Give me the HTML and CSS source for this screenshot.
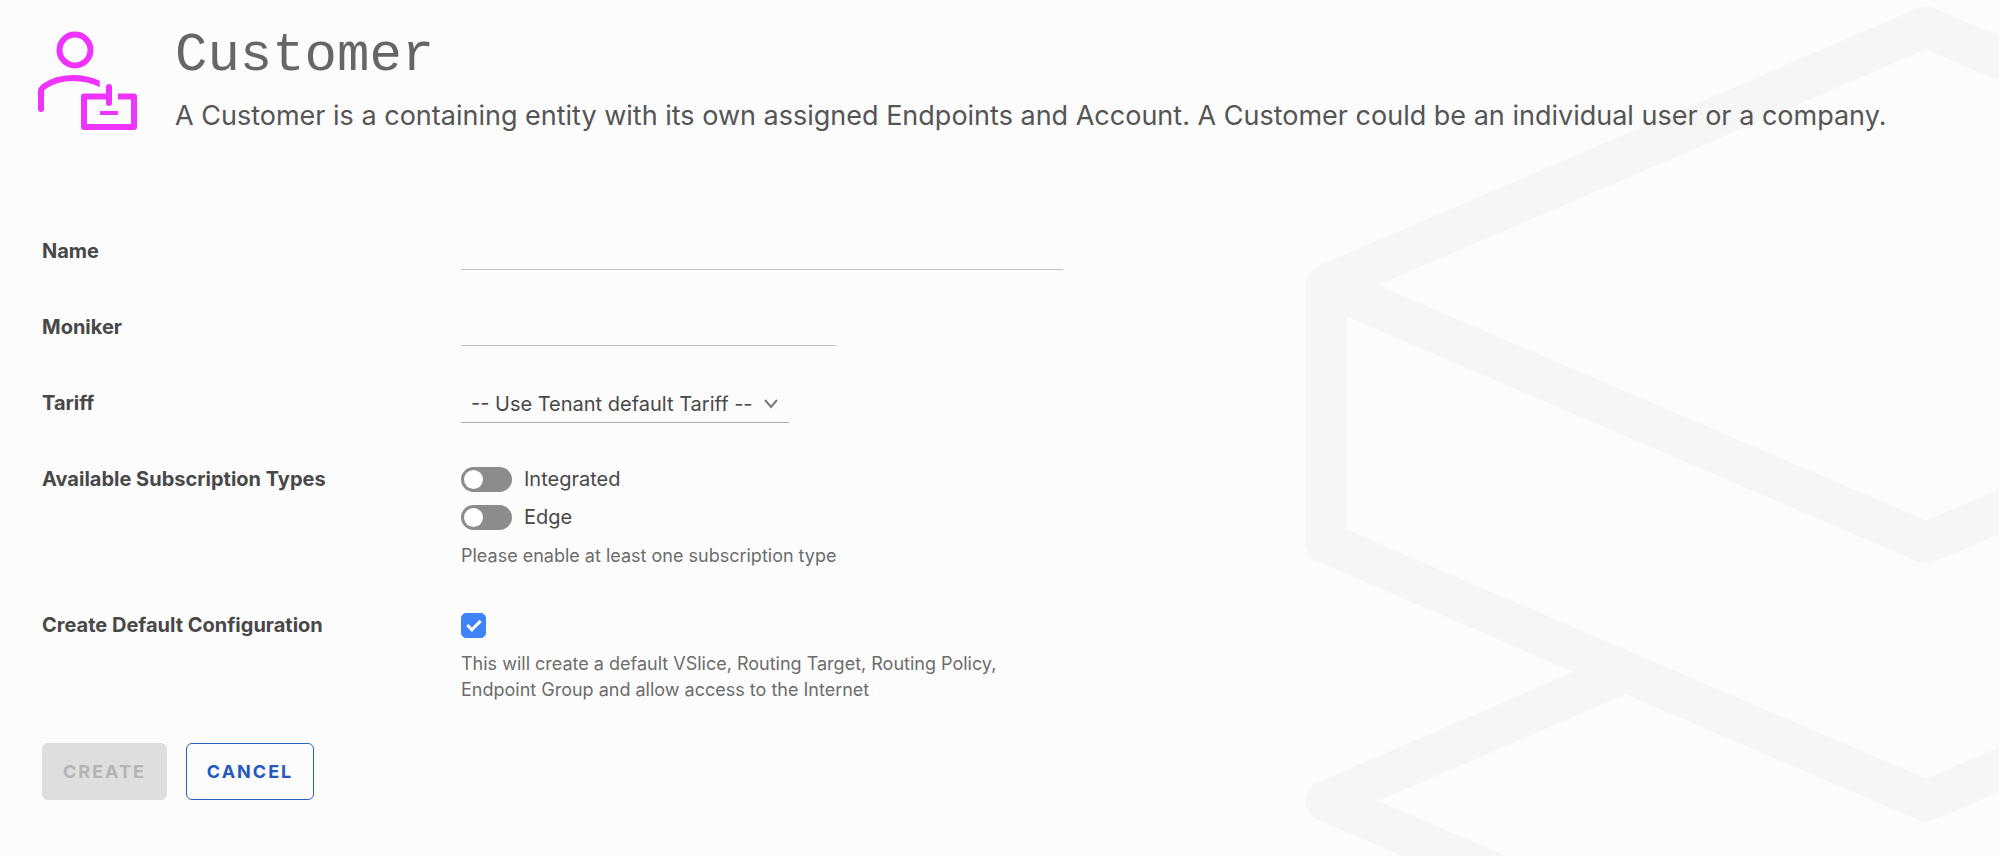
FILE: index.html
```html
<!DOCTYPE html>
<html lang="en">
<head>
    <meta charset="UTF-8">
    <meta name="viewport" content="width=device-width, initial-scale=1.0">
    <title>Customer</title>
    <link rel="stylesheet" href="styles.css">
</head>
<body>
    <svg class="backdrop" viewBox="0 0 694 856" width="694" height="856" aria-hidden="true">
        <g fill="none" stroke="#f6f6f6" stroke-width="41" stroke-linejoin="round">
            <path d="M21 285 L621 27 L1221 285 V543 L621 801 L21 543 Z"/>
            <path d="M21 285 L621 543 L1221 285"/>
            <path d="M321 672 L21 801 L621 1059"/>
        </g>
    </svg>

    <main class="page">
        <header class="page-header">
            <svg class="page-icon" viewBox="0 0 100 100" width="100" height="100" aria-hidden="true">
                <clipPath id="shoulder">
                    <path d="M-5 40 H61.7 V90 H-5 Z"/>
                </clipPath>
                <g fill="none" stroke="#ee33ff" stroke-width="6" stroke-linecap="round" stroke-linejoin="round">
                    <circle cx="37" cy="20" r="15.5"/>
                    <path d="M3 79 V61 Q3 59 6 56.5 C22 45.5 46 45 66 56" clip-path="url(#shoulder)"/>
                    <path d="M71 57 V73"/>
                    <path d="M71 66.5 H46 V97 H96 V66.5 H80" stroke-linecap="butt"/>
                    <path d="M62 83 H80" stroke-width="4" stroke-linecap="butt"/>
                </g>
            </svg>
            <div class="page-heading">
                <h1>Customer</h1>
                <p>A Customer is a containing entity with its own assigned Endpoints and Account. A Customer could be an individual user or a company.</p>
            </div>
        </header>

        <form class="customer-form">
            <div class="row">
                <label class="row-label" for="name">Name</label>
                <input class="text-input" type="text" id="name">
            </div>
            <div class="row">
                <label class="row-label" for="moniker">Moniker</label>
                <input class="text-input short" type="text" id="moniker">
            </div>
            <div class="row">
                <label class="row-label" for="tariff">Tariff</label>
                <div class="select">
                    <select id="tariff">
                        <option>-- Use Tenant default Tariff --</option>
                    </select>
                    <svg class="chevron" viewBox="0 0 16 10" width="16" height="10" aria-hidden="true">
                        <path d="M2 1 L8 8 L14 1" fill="none" stroke="#777" stroke-width="2"/>
                    </svg>
                </div>
            </div>
            <div class="row" role="group" aria-labelledby="types-label">
                <span class="row-label" id="types-label">Available Subscription Types</span>
                <div class="row-field">
                    <label class="switch"><input type="checkbox" role="switch"> Integrated</label>
                    <label class="switch"><input type="checkbox" role="switch"> Edge</label>
                    <p class="help">Please enable at least one subscription type</p>
                </div>
            </div>
            <div class="row">
                <label class="row-label" for="default-config">Create Default Configuration</label>
                <div class="row-field">
                    <div class="check">
                        <input type="checkbox" id="default-config" checked>
                    </div>
                    <p class="help">This will create a default VSlice, Routing Target, Routing Policy, Endpoint Group and allow access to the Internet</p>
                </div>
            </div>
            <div class="buttons">
                <button class="button create" type="submit" disabled>Create</button>
                <button class="button cancel" type="button">Cancel</button>
            </div>
        </form>
    </main>
</body>
</html>
```

FILE: styles.css
```css
* {
    box-sizing: border-box;
}
body {
    position: relative;
    min-height: 100vh;
    margin: 0;
    overflow-x: hidden;
    background-color: #fcfcfc;
    color: #484848;
    font-family: Inter, "Liberation Sans", sans-serif;
    font-size: 20px;
}
/* big outline behind the form */
.backdrop {
    position: absolute;
    top: 0;
    right: 0;
    z-index: -1;
}
.page {
    padding: 24px 38px 40px;
}
.page-header {
    display: flex;
    gap: 37px;
    margin-bottom: 97px;
}
.page-icon {
    flex: none;
    margin-top: 6px;
    overflow: visible;
}
h1 {
    margin: 0;
    padding-top: 2px;
    color: #666;
    font-family: "Liberation Mono", monospace;
    font-size: 54px;
    font-weight: normal;
    line-height: 60px;
}
.page-heading p {
    margin: 12px 0 0;
    color: #555;
    font-size: 27px;
    line-height: 36px;
}

.customer-form {
    padding-left: 4px;
}
.row {
    display: grid;
    grid-template-columns: 419px 1fr;
    align-items: start;
    min-height: 40px;
    margin-bottom: 36px;
}
.row-label {
    font-weight: 700;
    line-height: 40px;
}
.text-input {
    width: 602px;
    max-width: 100%;
    height: 39px;
    padding: 0 10px;
    border: none;
    border-bottom: 1px solid #c0c0c0;
    background: none;
    color: inherit;
    font: inherit;
}
.text-input.short {
    width: 375px;
}

.select {
    position: relative;
    width: 328px;
}
.select select {
    width: 100%;
    height: 40px;
    padding: 2px 30px 0 10px;
    border: none;
    border-bottom: 1px solid #aaa;
    border-radius: 0;
    appearance: none;
    background: none;
    color: inherit;
    font: inherit;
}
.chevron {
    position: absolute;
    top: 16px;
    right: 10px;
    pointer-events: none;
}

.row-field {
    padding-top: 1px;
}
.switch {
    display: flex;
    align-items: center;
    gap: 12px;
    width: fit-content;
    height: 38px;
}
.switch input {
    display: flex;
    align-items: center;
    width: 51px;
    height: 25px;
    margin: 0;
    padding: 3px;
    border-radius: 13px;
    appearance: none;
    background-color: #8c8c8c;
}
.switch input::before {
    content: "";
    width: 19px;
    height: 19px;
    border-radius: 50%;
    background-color: white;
}
.switch input:checked {
    justify-content: flex-end;
    background-color: #3f83f8;
}
.help {
    max-width: 580px;
    margin: 7px 0 0;
    color: #6c6c6c;
    font-size: 18px;
    line-height: 26px;
}
.check {
    display: flex;
    align-items: center;
    height: 38px;
}
.check input {
    display: flex;
    justify-content: center;
    width: 25px;
    height: 25px;
    margin: 0;
    border: 1px solid #8c8c8c;
    border-radius: 5px;
    appearance: none;
}
.check input:checked {
    border-color: #3f83f8;
    background-color: #3f83f8;
}
.check input:checked::before {
    content: "";
    width: 8px;
    height: 14px;
    margin-top: 3px;
    border: solid white;
    border-width: 0 3px 3px 0;
    box-sizing: border-box;
    transform: rotate(45deg);
}

.buttons {
    display: flex;
    gap: 19px;
    margin-top: 40px;
}
.button {
    height: 57px;
    padding: 0 20px;
    border: 1px solid;
    border-radius: 6px;
    font-family: inherit;
    font-size: 18px;
    font-weight: 700;
    letter-spacing: 2px;
    text-transform: uppercase;
}
.create {
    border-color: #dedede;
    background-color: #dedede;
    color: #b4b4b4;
}
.cancel {
    border-color: #2a60c0;
    background-color: #fcfcfc;
    color: #2459bd;
}
```
